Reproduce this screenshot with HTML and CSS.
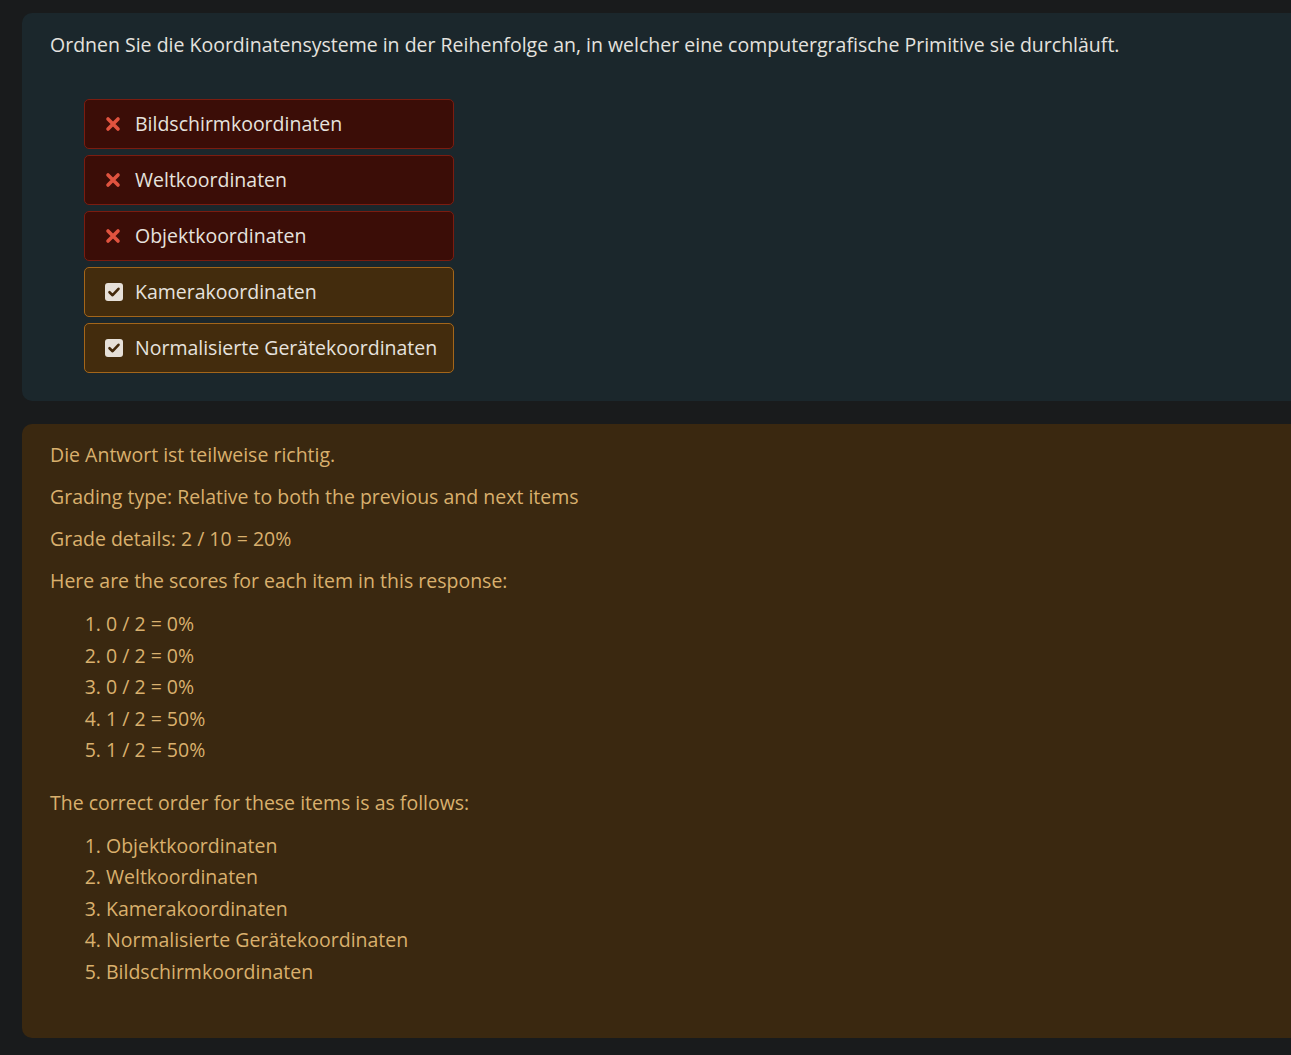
FILE: index.html
```html
<!DOCTYPE html>
<html lang="de">
<head>
<meta charset="utf-8">
<link rel="stylesheet" href="styles.css">
</head>
<body>
<div class="page">
  <section class="card question">
    <p class="qtext">Ordnen Sie die Koordinatensysteme in der Reihenfolge an, in welcher eine computergrafische Primitive sie durchläuft.</p>
    <ul class="items">
      <li class="item wrong"><span class="icon"><svg width="16" height="16" viewBox="0 0 16 16"><path d="M3 3 L13 13 M13 3 L3 13" stroke="#e0533f" stroke-width="3.6" stroke-linecap="round"/></svg></span>Bildschirmkoordinaten</li>
      <li class="item wrong"><span class="icon"><svg width="16" height="16" viewBox="0 0 16 16"><path d="M3 3 L13 13 M13 3 L3 13" stroke="#e0533f" stroke-width="3.6" stroke-linecap="round"/></svg></span>Weltkoordinaten</li>
      <li class="item wrong"><span class="icon"><svg width="16" height="16" viewBox="0 0 16 16"><path d="M3 3 L13 13 M13 3 L3 13" stroke="#e0533f" stroke-width="3.6" stroke-linecap="round"/></svg></span>Objektkoordinaten</li>
      <li class="item partial"><span class="icon"><svg width="18" height="18" viewBox="0 0 18 18"><rect x="0" y="0" width="18" height="18" rx="3" fill="#e6e0d8"/><path d="M4.5 9.2 L7.6 12.2 L13.5 5.8" stroke="#43290b" stroke-width="2.6" fill="none" stroke-linecap="round" stroke-linejoin="round"/></svg></span>Kamerakoordinaten</li>
      <li class="item partial"><span class="icon"><svg width="18" height="18" viewBox="0 0 18 18"><rect x="0" y="0" width="18" height="18" rx="3" fill="#e6e0d8"/><path d="M4.5 9.2 L7.6 12.2 L13.5 5.8" stroke="#43290b" stroke-width="2.6" fill="none" stroke-linecap="round" stroke-linejoin="round"/></svg></span>Normalisierte Gerätekoordinaten</li>
    </ul>
  </section>
  <section class="card feedback">
    <p class="line">Die Antwort ist teilweise richtig.</p>
    <p class="line">Grading type: Relative to both the previous and next items</p>
    <p class="line">Grade details: 2 / 10 = 20%</p>
    <p class="line">Here are the scores for each item in this response:</p>
    <ol class="list">
      <li>0 / 2 = 0%</li>
      <li>0 / 2 = 0%</li>
      <li>0 / 2 = 0%</li>
      <li>1 / 2 = 50%</li>
      <li>1 / 2 = 50%</li>
    </ol>
    <p class="line">The correct order for these items is as follows:</p>
    <ol class="list">
      <li>Objektkoordinaten</li>
      <li>Weltkoordinaten</li>
      <li>Kamerakoordinaten</li>
      <li>Normalisierte Gerätekoordinaten</li>
      <li>Bildschirmkoordinaten</li>
    </ol>
  </section>
</div>
</body>
</html>
```
FILE: styles.css
```css
html, body {
  margin: 0;
  padding: 0;
  background: #191b1c;
}
body {
  font-family: "Open Sans", "Noto Sans", sans-serif;
  font-size: 19.5px;
  overflow: hidden;
}
.page {
  padding: 13px 0 0 22px;
  display: flex;
  flex-direction: column;
  gap: 23px;
}
.card {
  border-radius: 10px 0 0 10px;
  padding: 0 28px;
}
.question {
  background: #1b272c;
  color: #e4e2df;
  height: 388px;
  box-sizing: border-box;
  padding-top: 20px;
}
.qtext {
  margin: 0;
  line-height: 24px;
}
.items {
  list-style: none;
  margin: 42px 0 0 34px;
  padding: 0;
  display: flex;
  flex-direction: column;
  gap: 6px;
  width: 370px;
}
.item {
  height: 50px;
  box-sizing: border-box;
  border: 1px solid;
  border-radius: 5px;
  display: flex;
  align-items: center;
  padding: 0 0 2px 20px;
  color: #e6e2de;
}
.item .icon {
  width: 30px;
  display: flex;
  align-items: center;
  padding-top: 2px;
}
.wrong {
  background: #3b0d07;
  border-color: #7b1c10;
}
.partial {
  background: #432c0d;
  border-color: #a4661a;
}
.feedback {
  background: #3a2810;
  color: #d9b06d;
  height: 614px;
  box-sizing: border-box;
  padding-top: 19px;
}
.line {
  margin: 0 0 18px;
  line-height: 24px;
}
.list {
  margin: -3px 0 25px;
  padding: 0 0 0 56px;
  line-height: 31.5px;
}
```
